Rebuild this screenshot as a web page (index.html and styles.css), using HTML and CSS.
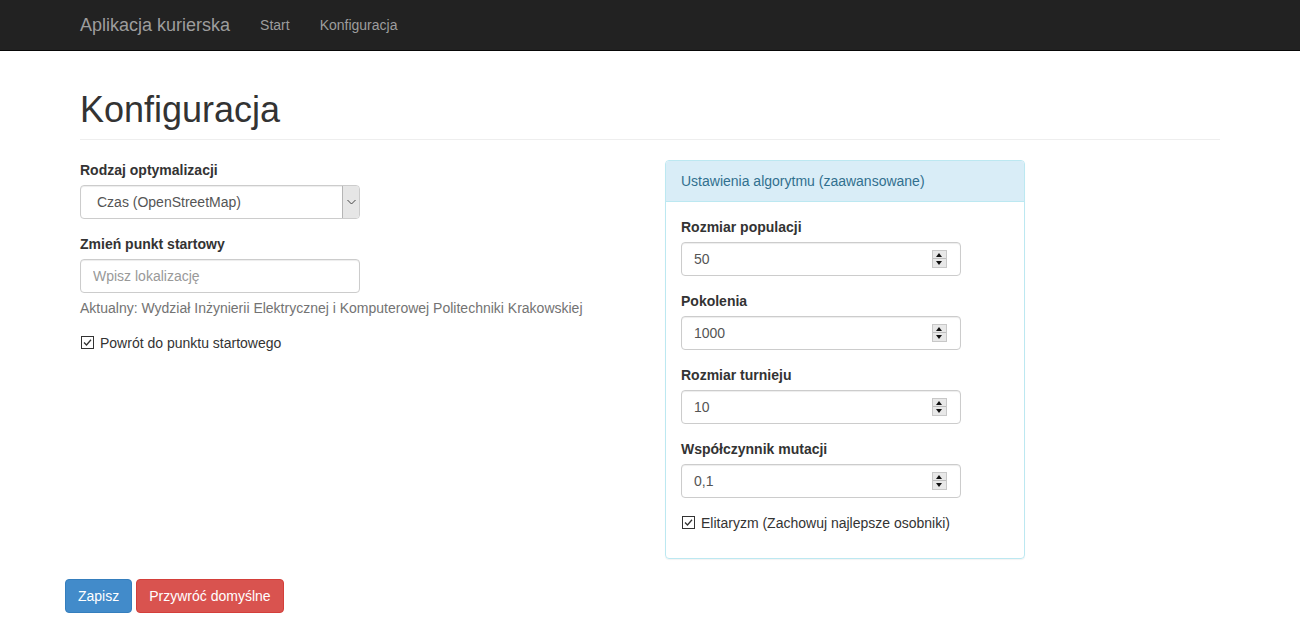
FILE: index.html
```html
<!DOCTYPE html>
<html lang="pl">
<head>
<meta charset="utf-8">
<title>Konfiguracja</title>
<link rel="stylesheet" href="styles.css">
</head>
<body>
<nav class="navbar">
  <div class="container nav-inner">
    <a class="brand" href="#">Aplikacja kurierska</a>
    <ul class="nav">
      <li><a href="#">Start</a></li>
      <li><a href="#">Konfiguracja</a></li>
    </ul>
  </div>
</nav>
<div class="container">
  <div class="page-header"><h1>Konfiguracja</h1></div>
  <form class="form">
    <div class="row">
      <div class="col">
        <div class="form-group">
          <label class="label">Rodzaj optymalizacji</label>
          <div class="select-wrap">
            <select class="control select">
              <option>Czas (OpenStreetMap)</option>
            </select>
            <span class="select-btn"><svg width="9" height="6" viewBox="0 0 9 6"><path d="M0.5 1 L4.5 5 L8.5 1" fill="none" stroke="#444" stroke-width="1"/></svg></span>
          </div>
        </div>
        <div class="form-group">
          <label class="label">Zmień punkt startowy</label>
          <input class="control" type="text" placeholder="Wpisz lokalizację">
          <p class="help">Aktualny: Wydział Inżynierii Elektrycznej i Komputerowej Politechniki Krakowskiej</p>
        </div>
        <div class="checkbox">
          <span class="cb"><svg width="13" height="13" viewBox="0 0 13 13"><rect x="0.5" y="0.5" width="12" height="12" fill="#fff" stroke="#333"/><path d="M3 6.5 L5.5 9 L10 3.8" fill="none" stroke="#333" stroke-width="1.3"/></svg></span>
          <span>Powrót do punktu startowego</span>
        </div>
      </div>
      <div class="col">
        <div class="panel">
          <div class="panel-heading">Ustawienia algorytmu (zaawansowane)</div>
          <div class="panel-body">
            <div class="form-group">
              <label class="label">Rozmiar populacji</label>
              <div class="num-wrap"><input class="control" type="text" value="50"><span class="spin"><span class="up"></span><span class="down"></span></span></div>
            </div>
            <div class="form-group">
              <label class="label">Pokolenia</label>
              <div class="num-wrap"><input class="control" type="text" value="1000"><span class="spin"><span class="up"></span><span class="down"></span></span></div>
            </div>
            <div class="form-group">
              <label class="label">Rozmiar turnieju</label>
              <div class="num-wrap"><input class="control" type="text" value="10"><span class="spin"><span class="up"></span><span class="down"></span></span></div>
            </div>
            <div class="form-group">
              <label class="label">Współczynnik mutacji</label>
              <div class="num-wrap"><input class="control" type="text" value="0,1"><span class="spin"><span class="up"></span><span class="down"></span></span></div>
            </div>
            <div class="checkbox">
              <span class="cb"><svg width="13" height="13" viewBox="0 0 13 13"><rect x="0.5" y="0.5" width="12" height="12" fill="#fff" stroke="#333"/><path d="M3 6.5 L5.5 9 L10 3.8" fill="none" stroke="#333" stroke-width="1.3"/></svg></span>
              <span>Elitaryzm (Zachowuj najlepsze osobniki)</span>
            </div>
          </div>
        </div>
      </div>
    </div>
    <div class="actions">
      <button type="button" class="btn btn-primary">Zapisz</button>
      <button type="button" class="btn btn-danger">Przywróć domyślne</button>
    </div>
  </form>
</div>
</body>
</html>
```
FILE: styles.css
```css
* { box-sizing: border-box; }
html, body { margin: 0; padding: 0; }
body {
  font-family: "Liberation Sans", Arial, Helvetica, sans-serif;
  font-size: 14px;
  line-height: 20px;
  color: #333;
  background: #fff;
}
.container {
  width: 1170px;
  margin: 0 auto;
  padding: 0 15px;
}
.navbar {
  background: #222;
  border-bottom: 1px solid #080808;
  height: 51px;
}
.nav-inner {
  display: flex;
  align-items: flex-start;
}
.brand {
  display: block;
  font-size: 18px;
  line-height: 20px;
  padding: 15px 15px;
  margin-left: -15px;
  color: #9d9d9d;
  text-decoration: none;
}
.nav {
  display: flex;
  list-style: none;
  margin: 0;
  padding: 0;
}
.nav a {
  display: block;
  padding: 15px 15px;
  line-height: 20px;
  color: #9d9d9d;
  text-decoration: none;
}
.page-header {
  margin: 39px 0 20px;
  padding-bottom: 9px;
  border-bottom: 1px solid #eee;
}
.page-header h1 {
  margin: 0;
  font-size: 36px;
  font-weight: 500;
  line-height: 1.1;
}
.row {
  display: flex;
  margin: 0 -15px;
}
.col {
  width: 50%;
  padding: 0 15px;
}
.form-group { margin-bottom: 15px; }
.label {
  display: block;
  font-weight: bold;
  margin-bottom: 5px;
}
.control {
  display: block;
  width: 280px;
  height: 34px;
  padding: 6px 12px;
  font-family: inherit;
  font-size: 14px;
  line-height: 20px;
  color: #555;
  background: #fff;
  border: 1px solid #ccc;
  border-radius: 4px;
  box-shadow: inset 0 1px 1px rgba(0,0,0,.075);
  outline: none;
  margin: 0;
}
.control::placeholder { color: #999; }
.select-wrap, .num-wrap {
  position: relative;
  width: 280px;
}
.select {
  -webkit-appearance: none;
  appearance: none;
  padding-left: 16px;
}
.select-btn {
  position: absolute;
  right: 1px;
  top: 1px;
  width: 17px;
  height: 32px;
  background: #e6e6e6;
  border-left: 1px solid #b5b5b5;
  border-radius: 0 3px 3px 0;
  display: flex;
  align-items: center;
  justify-content: center;
}
.help {
  margin: 5px 0 10px;
  color: #737373;
}
.checkbox {
  display: flex;
  align-items: center;
  gap: 6px;
  margin: 0 0 10px;
  padding-left: 1px;
}
.cb { display: flex; }
.cb svg { display: block; }
.panel {
  width: 360px;
  border: 1px solid #bce8f1;
  border-radius: 4px;
  margin-bottom: 20px;
  box-shadow: 0 1px 1px rgba(0,0,0,.05);
}
.panel-heading {
  background: #d9edf7;
  color: #31708f;
  padding: 10px 15px;
  border-bottom: 1px solid #bce8f1;
  border-radius: 3px 3px 0 0;
}
.panel-body {
  padding: 15px;
}
.spin {
  position: absolute;
  right: 14px;
  top: 8px;
  width: 15px;
  height: 18px;
  display: flex;
  flex-direction: column;
  background: #e8e8e8;
  border: 1px solid #c8c8c8;
}
.spin .up, .spin .down {
  flex: 1;
  position: relative;
}
.spin .up { border-bottom: 1px solid #bdbdbd; }
.spin .up::after, .spin .down::after {
  content: "";
  position: absolute;
  left: 3px;
  width: 0;
  height: 0;
  border-left: 3.5px solid transparent;
  border-right: 3.5px solid transparent;
}
.spin .up::after { top: 2px; border-bottom: 4px solid #111; }
.spin .down::after { top: 2px; border-top: 4px solid #111; }
.actions {
  display: flex;
  gap: 4px;
  margin-left: -15px;
}
.btn {
  height: 34px;
  padding: 6px 12px;
  font-family: inherit;
  font-size: 14px;
  line-height: 20px;
  border: 1px solid transparent;
  border-radius: 4px;
  color: #fff;
  cursor: pointer;
}
.btn-primary { background: #428bca; border-color: #357ebd; }
.btn-danger { background: #d9534f; border-color: #d43f3a; }
```
